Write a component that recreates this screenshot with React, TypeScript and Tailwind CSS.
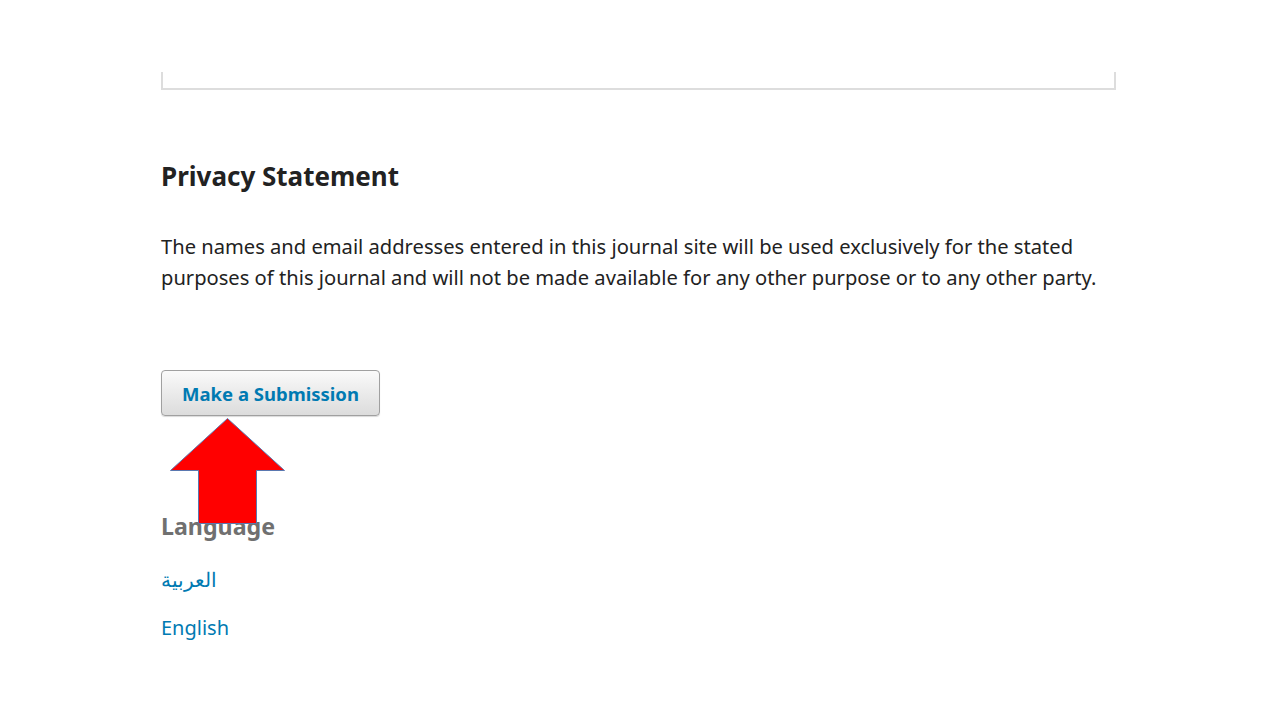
import React from 'react';

const font = { fontFamily: '"Noto Sans", "Open Sans", Arial, sans-serif' };

const App: React.FC = () => {
  return (
    <div className="relative min-h-[720px] w-[1280px] bg-white text-[#222]" style={font}>
      <div className="pt-[72px] pl-[161px]">
        <div className="h-[18px] w-[955px] border-x-2 border-b-2 border-[#ddd]" />

        <h2 className="mt-[68px] text-[26px] font-bold leading-[36px] text-[#222]">Privacy Statement</h2>

        <p className="mt-[37px] w-[960px] text-[20.15px] leading-[31px] text-[#222]">
          The names and email addresses entered in this journal site will be used exclusively for the stated purposes of this journal and will not be made available for any other purpose or to any other party.
        </p>

        <div className="relative mt-[77px]">
          <button className="h-[46px] w-[219px] rounded-[4px] border border-[#a0a0a0] bg-gradient-to-b from-[#fafafa] to-[#dcdcdc] pt-[2px] text-[18.5px] font-bold text-[#007ab2] shadow-[0_1px_1px_rgba(0,0,0,0.15)]">
            Make a Submission
          </button>

          <div className="mt-[94px] text-[23.2px] font-bold leading-[32px] text-[#707070]">Language</div>
          <ul className="mt-[23px] space-y-[18px] text-[20px] leading-[30px] text-[#007ab2]">
            <li>
              <a href="#" dir="rtl">العربية</a>
            </li>
            <li>
              <a href="#">English</a>
            </li>
          </ul>

          {/* red arrow pointing to the button */}
          <svg className="absolute left-[8px] top-[48px]" width="118" height="108" viewBox="0 0 118 108">
            <polygon
              points="58.5,0.5 115.5,52.5 87.5,52.5 87.5,105.5 29.5,105.5 29.5,52.5 1.5,52.5"
              fill="#ff0000"
              stroke="#5a78b0"
              strokeWidth="1"
            />
          </svg>
        </div>
      </div>
    </div>
  );
};

export default App;
